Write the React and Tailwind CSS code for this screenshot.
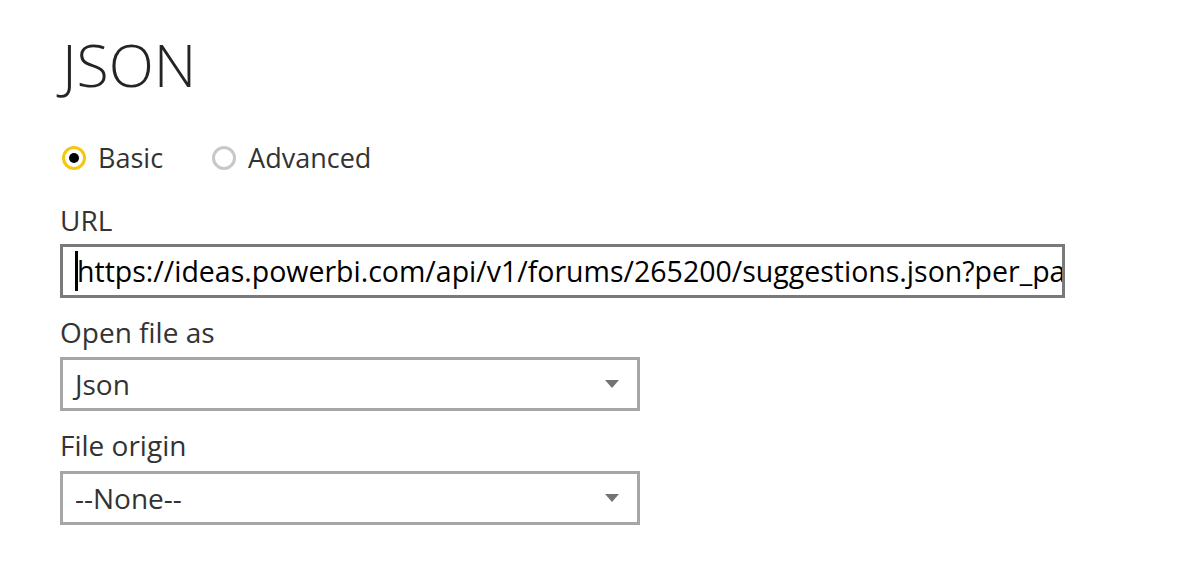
import React from 'react';

const font = { fontFamily: '"Open Sans", "Noto Sans", sans-serif' };

function Radio({ checked, label }) {
  return (
    <div className="flex items-center gap-[12px]">
      <span
        className={`flex h-[24px] w-[24px] items-center justify-center rounded-full border-[3px] ${
          checked ? 'border-[#f2c811]' : 'border-[#c8c8c8]'
        }`}
      >
        {checked && <span className="h-[10px] w-[10px] rounded-full bg-black" />}
      </span>
      <span className="text-[27px] leading-[32px] text-[#333333]">{label}</span>
    </div>
  );
}

function Select({ value }) {
  return (
    <div className="flex h-[54px] w-[580px] items-center justify-between border-[3px] border-[#a6a6a6] bg-white pl-[12px] pr-[18px]">
      <span className="text-[28px] leading-[34px] text-[#333333]">{value}</span>
      <svg width="14" height="8" viewBox="0 0 14 8">
        <path d="M0 0 H14 L7 8 Z" fill="#737373" />
      </svg>
    </div>
  );
}

export default function App() {
  return (
    <div className="h-[573px] w-[1182px] overflow-hidden bg-white pl-[60px] pt-[24px]" style={font}>
      <h1 className="ml-[2px] text-[59px] font-light leading-[80px] text-[#252423]">JSON</h1>

      <div className="mt-[38px] flex items-center gap-[49px] pl-[2px]">
        <Radio checked label="Basic" />
        <Radio label="Advanced" />
      </div>

      <div className="mt-[29px] text-[28px] leading-[34px] text-[#333333]">URL</div>
      <div className="mt-[7px] flex h-[54px] w-[1005px] items-center overflow-hidden border-[3px] border-[#7a7a7a] bg-white pl-[12px]">
        <span className="h-[40px] w-[3px] shrink-0 bg-black" />
        <span className="-ml-[1px] whitespace-nowrap text-[28.5px] leading-[34px] text-black">
          https://ideas.powerbi.com/api/v1/forums/265200/suggestions.json?per_page=100
        </span>
      </div>

      <div className="mt-[17px] text-[28px] leading-[34px] text-[#333333]">Open file as</div>
      <div className="mt-[8px]">
        <Select value="Json" />
      </div>

      <div className="mt-[17px] text-[28px] leading-[34px] text-[#333333]">File origin</div>
      <div className="mt-[9px]">
        <Select value="--None--" />
      </div>
    </div>
  );
}
